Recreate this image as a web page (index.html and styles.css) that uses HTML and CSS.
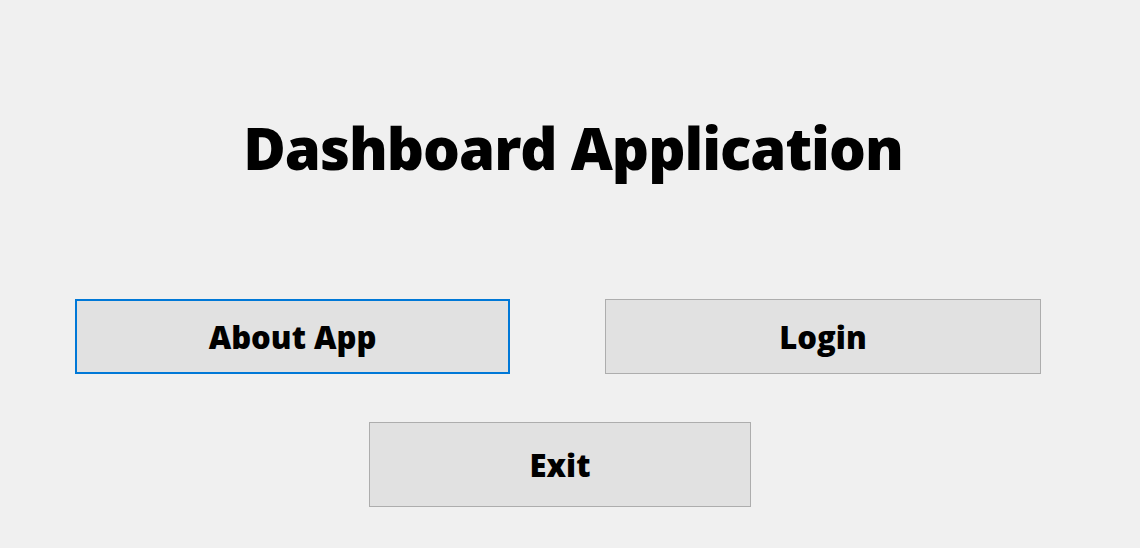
FILE: index.html
```html
<!DOCTYPE html>
<html lang="en">
<head>
<meta charset="utf-8">
<title>Dashboard Application</title>
<link rel="stylesheet" href="styles.css">
</head>
<body>
<main class="window">
  <h1 class="title">Dashboard Application</h1>
  <div class="row">
    <button class="btn btn-focused">About App</button>
    <button class="btn">Login</button>
  </div>
  <div class="row row-center">
    <button class="btn btn-exit">Exit</button>
  </div>
</main>
</body>
</html>
```

FILE: styles.css
```css
html, body {
  margin: 0;
  padding: 0;
  background: #f0f0f0;
}
.window {
  width: 1140px;
  height: 548px;
  box-sizing: border-box;
  display: flex;
  flex-direction: column;
  font-family: "Open Sans", "Noto Sans", sans-serif;
  color: #000;
}
.title {
  margin: 108px 0 0 0;
  padding-left: 6px;
  text-align: center;
  font-size: 58px;
  font-weight: 800;
  line-height: 80px;
  letter-spacing: -1px;
}
.row {
  display: flex;
  gap: 95px;
  padding-left: 75px;
  margin-top: 111px;
}
.row-center {
  padding-left: 369px;
  margin-top: 48px;
}
.btn {
  box-sizing: border-box;
  width: 436px;
  height: 75px;
  background: #e1e1e1;
  border: 1px solid #adadad;
  font-family: "Open Sans", "Noto Sans", sans-serif;
  font-weight: 800;
  font-size: 31px;
  color: #000;
  padding: 0;
  margin: 0;
}
.btn-focused {
  width: 435px;
  border: 2px solid #0078d7;
}
.btn-exit {
  width: 382px;
  height: 85px;
}
```
